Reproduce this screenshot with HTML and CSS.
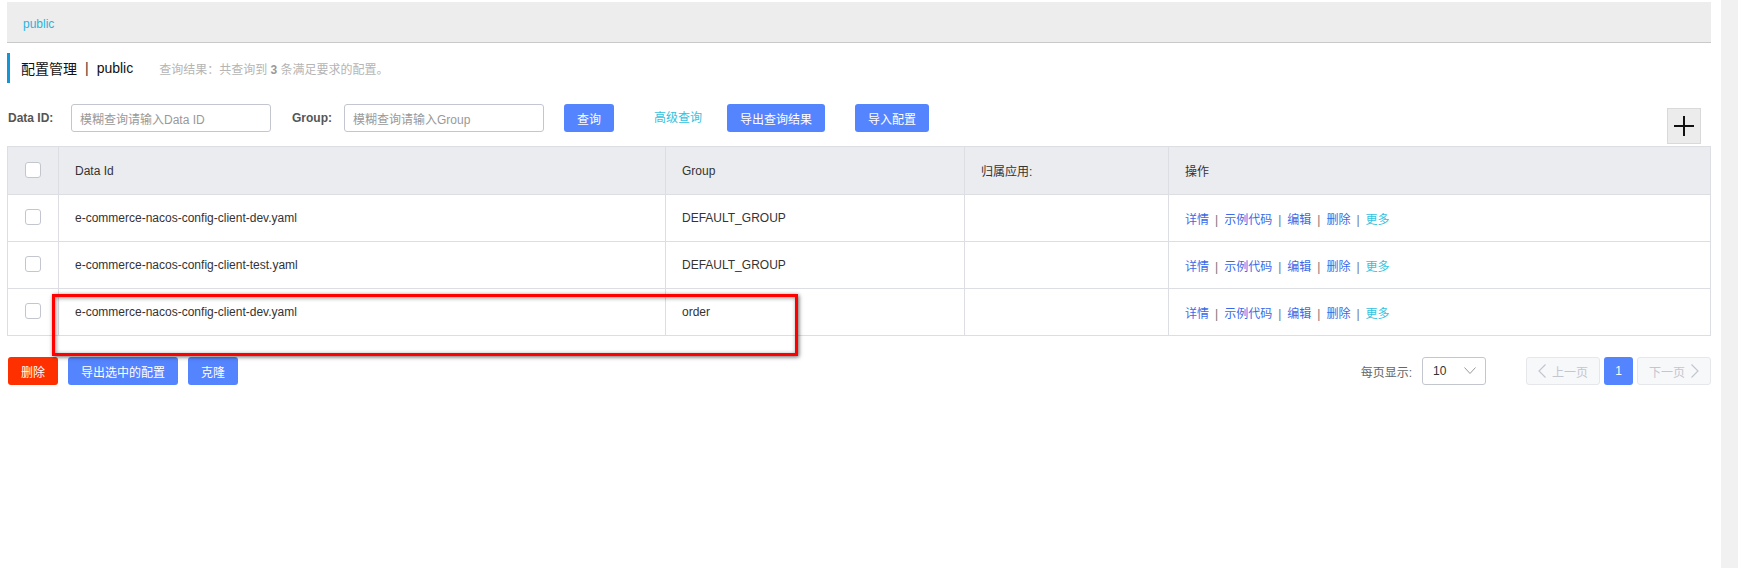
FILE: index.html
```html
<!DOCTYPE html>
<html lang="zh-CN">
<head>
<meta charset="utf-8">
<title>配置管理</title>
<link rel="stylesheet" href="styles.css">
</head>
<body>
<div class="page">
  <main class="main">
    <div class="topbar"><span class="ns-link">public</span></div>

    <div class="title-row">
      <span class="title">配置管理</span>
      <span class="title-sep">|</span>
      <span class="title">public</span>
      <span class="result">查询结果：共查询到 <b>3</b> 条满足要求的配置。</span>
    </div>

    <div class="search-row">
      <label class="field-label label-dataid">Data ID:</label>
      <div class="input"><span class="placeholder">模糊查询请输入Data ID</span></div>
      <label class="field-label label-group">Group:</label>
      <div class="input"><span class="placeholder">模糊查询请输入Group</span></div>
      <button class="btn btn-primary btn-query">查询</button>
      <a class="adv-link">高级查询</a>
      <button class="btn btn-primary btn-export">导出查询结果</button>
      <button class="btn btn-primary btn-import">导入配置</button>
      <button class="plus-btn" aria-label="新建配置">
        <svg width="20" height="20" viewBox="0 0 20 20"><path d="M10 0V20M0 10H20" stroke="#111" stroke-width="2"/></svg>
      </button>
    </div>

    <div class="table-wrap">
      <table class="cfg-table">
        <colgroup>
          <col class="c-check"><col class="c-id"><col class="c-group"><col class="c-app"><col class="c-ops">
        </colgroup>
        <thead>
          <tr>
            <th class="cell-check"><span class="checkbox"></span></th>
            <th>Data Id</th>
            <th>Group</th>
            <th>归属应用:</th>
            <th>操作</th>
          </tr>
        </thead>
        <tbody>
          <tr>
            <td class="cell-check"><span class="checkbox"></span></td>
            <td>e-commerce-nacos-config-client-dev.yaml</td>
            <td>DEFAULT_GROUP</td>
            <td></td>
            <td class="ops"><a>详情</a><span class="sep">|</span><a>示例代码</a><span class="sep">|</span><a>编辑</a><span class="sep">|</span><a>删除</a><span class="sep">|</span><a class="more">更多</a></td>
          </tr>
          <tr>
            <td class="cell-check"><span class="checkbox"></span></td>
            <td>e-commerce-nacos-config-client-test.yaml</td>
            <td>DEFAULT_GROUP</td>
            <td></td>
            <td class="ops"><a>详情</a><span class="sep">|</span><a>示例代码</a><span class="sep">|</span><a>编辑</a><span class="sep">|</span><a>删除</a><span class="sep">|</span><a class="more">更多</a></td>
          </tr>
          <tr>
            <td class="cell-check"><span class="checkbox"></span></td>
            <td>e-commerce-nacos-config-client-dev.yaml</td>
            <td>order</td>
            <td></td>
            <td class="ops"><a>详情</a><span class="sep">|</span><a>示例代码</a><span class="sep">|</span><a>编辑</a><span class="sep">|</span><a>删除</a><span class="sep">|</span><a class="more">更多</a></td>
          </tr>
        </tbody>
      </table>
      <div class="highlight"></div>
    </div>

    <div class="footer-row">
      <button class="btn btn-danger btn-del">删除</button>
      <button class="btn btn-primary btn-export-sel">导出选中的配置</button>
      <button class="btn btn-primary btn-clone">克隆</button>
      <div class="pager">
        <span class="pager-label">每页显示:</span>
        <div class="select">
          <span>10</span>
          <svg width="12" height="8" viewBox="0 0 12 8"><path d="M0.5 0.5L6 6.5L11.5 0.5" fill="none" stroke="#999" stroke-width="1"/></svg>
        </div>
        <button class="page-btn page-nav">
          <svg width="8" height="14" viewBox="0 0 8 14"><path d="M7.5 0.5L1 7L7.5 13.5" fill="none" stroke="#c4c6cf" stroke-width="1.2"/></svg>
          <span>上一页</span>
        </button>
        <button class="page-btn page-current">1</button>
        <button class="page-btn page-nav">
          <span>下一页</span>
          <svg width="8" height="14" viewBox="0 0 8 14"><path d="M0.5 0.5L7 7L0.5 13.5" fill="none" stroke="#c4c6cf" stroke-width="1.2"/></svg>
        </button>
      </div>
    </div>
  </main>
  <div class="scrollbar"></div>
</div>
</body>
</html>
```

FILE: styles.css
```css
* { box-sizing: border-box; }

html, body {
  margin: 0;
  padding: 0;
  background: #fff;
}

body {
  font-family: "Liberation Sans", "Noto Sans CJK SC", sans-serif;
  font-size: 12px;
  color: #333;
}

.page {
  display: flex;
  min-height: 568px;
}

.main {
  flex: 1;
  padding: 2px 10px 0 7px;
}

.scrollbar {
  width: 17px;
  flex: none;
  background: #f1f1f1;
}

/* top namespace bar */
.topbar {
  height: 41px;
  background: #ededed;
  border-bottom: 1px solid #c9c9c9;
  display: flex;
  align-items: center;
  padding-left: 16px;
}

.ns-link {
  color: #2ab4dc;
  font-size: 12px;
  padding-top: 3px;
}

/* title */
.title-row {
  margin-top: 10px;
  height: 30px;
  border-left: 3px solid #1296d6;
  display: flex;
  align-items: center;
  padding-left: 11px;
}

.title {
  font-size: 14px;
  color: #111;
}

.title-sep {
  font-size: 14px;
  color: #333;
  margin: 0 8px;
}

.result {
  margin-left: 26px;
  color: #b5b5b5;
  font-size: 12px;
}

.result b {
  color: #999;
}

/* search row */
.search-row {
  margin-top: 21px;
  display: flex;
  align-items: flex-start;
}

.field-label {
  font-weight: bold;
  color: #555;
  height: 28px;
  line-height: 29px;
  padding-left: 1px;
}

.label-dataid { width: 64px; }
.label-group { width: 53px; margin-left: 20px; }

.input {
  width: 200px;
  height: 28px;
  border: 1px solid #c4c6cf;
  border-radius: 3px;
  padding-left: 8px;
  display: flex;
  align-items: center;
}

.placeholder {
  color: #999;
}

.btn {
  height: 28px;
  border: none;
  border-radius: 3px;
  color: #fff;
  font-family: inherit;
  font-size: 12px;
  padding: 0;
  cursor: pointer;
}

.btn-primary { background: #5584ff; }
.btn-danger { background: #ff3000; }

.btn-query { width: 50px; margin-left: 20px; }
.adv-link {
  color: #33c2e0;
  line-height: 28px;
  margin-left: 40px;
}
.btn-export { width: 98px; margin-left: 25px; }
.btn-import { width: 74px; margin-left: 30px; }

.plus-btn {
  margin-left: auto;
  margin-right: 10px;
  margin-top: 4px;
  width: 34px;
  height: 36px;
  background: #ececec;
  border: 1px solid #d9d9d9;
  padding: 0;
  display: flex;
  align-items: center;
  justify-content: center;
}

/* table */
.table-wrap {
  position: relative;
  margin-top: 2px;
}

.cfg-table {
  width: 100%;
  border-collapse: collapse;
  table-layout: fixed;
}

.c-check { width: 51px; }
.c-id { width: 607px; }
.c-group { width: 299px; }
.c-app { width: 204px; }

.cfg-table th,
.cfg-table td {
  border: 1px solid #dcdee3;
  padding: 0 0 0 16px;
  text-align: left;
  font-weight: normal;
  color: #333;
  white-space: nowrap;
}

.cfg-table th {
  height: 48px;
  background: #ebecf0;
}

.cfg-table td {
  height: 47px;
}

.cfg-table .cell-check {
  padding: 0;
  text-align: center;
}

.checkbox {
  display: inline-block;
  width: 16px;
  height: 16px;
  border: 1px solid #c4c6cf;
  border-radius: 3px;
  background: #fff;
  vertical-align: middle;
  margin-top: -3px;
}

.ops a {
  color: #3a6ae8;
}

.ops a.more {
  color: #33c2e0;
}

.ops .sep {
  color: #777;
  margin: 0 6px;
}

.highlight {
  position: absolute;
  left: 45px;
  top: 148px;
  width: 746px;
  height: 62px;
  border: 3px solid #ff0000;
  box-shadow: 1px 1px 4px rgba(0, 0, 0, 0.6), inset 1px 1px 4px rgba(0, 0, 0, 0.45);
  pointer-events: none;
}

/* footer */
.footer-row {
  margin-top: 21px;
  display: flex;
  align-items: center;
}

.btn-del { width: 50px; margin-left: 1px; }
.btn-export-sel { width: 110px; margin-left: 10px; }
.btn-clone { width: 50px; margin-left: 10px; }

.pager {
  margin-left: auto;
  display: flex;
  align-items: center;
}

.pager-label {
  color: #666;
  margin-right: 10px;
}

.select {
  width: 64px;
  height: 28px;
  border: 1px solid #c4c6cf;
  border-radius: 3px;
  display: flex;
  align-items: center;
  justify-content: space-between;
  padding: 0 9px 0 10px;
  color: #333;
}

.page-btn {
  height: 28px;
  border-radius: 3px;
  font-family: inherit;
  font-size: 12px;
  padding: 0;
  display: flex;
  align-items: center;
  justify-content: center;
}

.page-nav {
  width: 74px;
  background: #f7f8fa;
  border: 1px solid #e6e7eb;
  color: #c4c6cf;
  gap: 6px;
}

.page-nav:first-of-type { margin-left: 40px; }

.page-current {
  width: 29px;
  margin: 0 4px;
  background: #5584ff;
  border: none;
  color: #fff;
}
```
